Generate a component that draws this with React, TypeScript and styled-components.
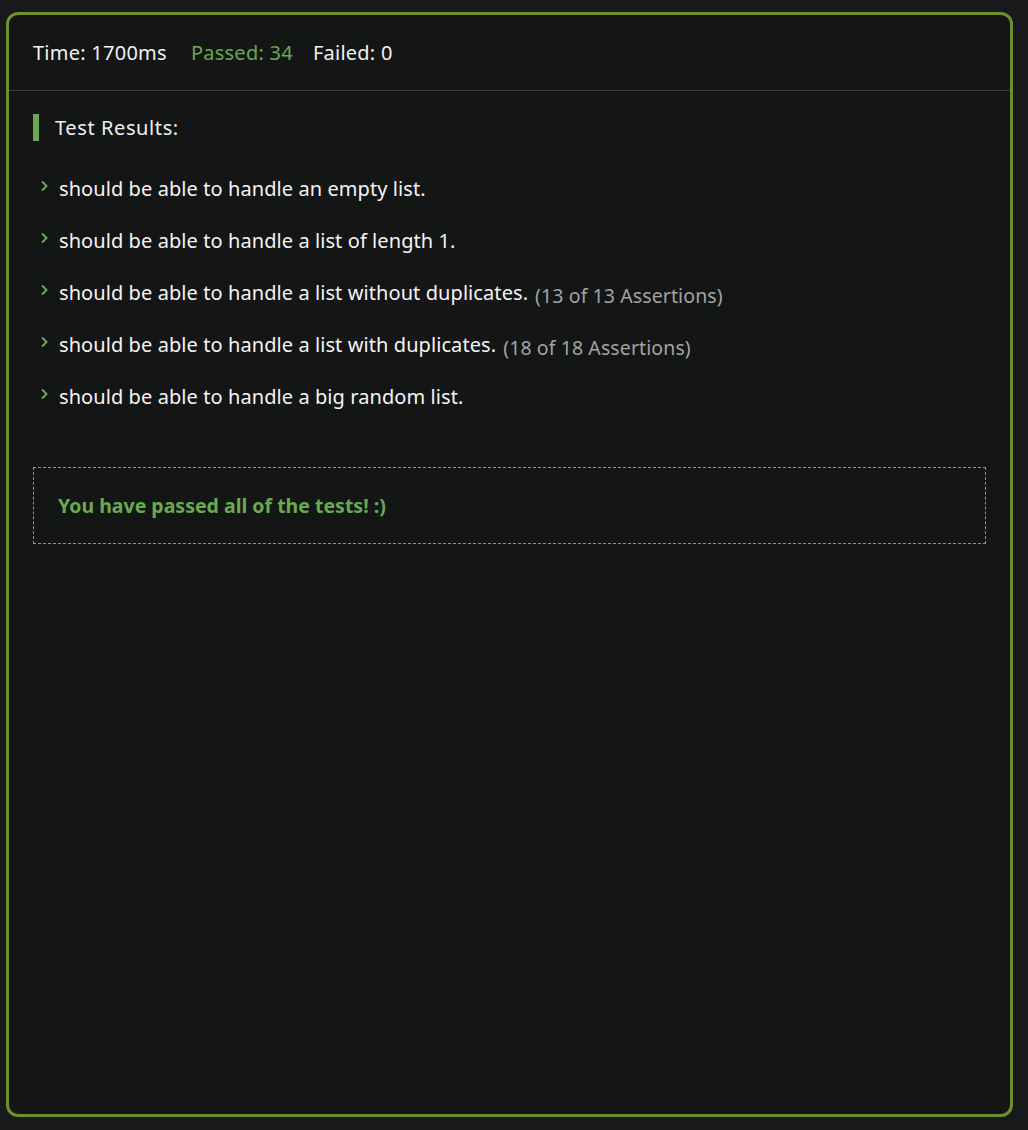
import React from "react";
import styled, { createGlobalStyle } from "styled-components";

const Global = createGlobalStyle`
  html, body {
    margin: 0;
    padding: 0;
    background: #18191b;
  }
  body {
    font-family: "Noto Sans", "Open Sans", sans-serif;
    color: #f0f0f0;
  }
`;

const Page = styled.div`
  padding: 12px 15px 13px 6px;
  height: 1130px;
  box-sizing: border-box;
  display: flex;
`;

const Panel = styled.div`
  flex: 1;
  border: 3px solid #6f8f2e;
  border-radius: 12px;
  background: #141515;
  display: flex;
  flex-direction: column;
`;

const Header = styled.div`
  height: 76px;
  border-bottom: 1px solid #3b3c3c;
  display: flex;
  align-items: center;
  padding: 0 24px;
  gap: 24px;
  font-size: 20px;
  letter-spacing: 0.25px;
  box-sizing: border-box;
`;

const Stat = styled.span<{ $color?: string }>`
  color: ${(p) => p.$color || "#f2f2f2"};
  margin-right: ${(p) => (p.$color ? "-4px" : "0")};
`;

const Body = styled.div`
  padding: 23px 24px 0 24px;
  display: flex;
  flex-direction: column;
`;

const SectionTitle = styled.div`
  display: flex;
  align-items: center;
  gap: 16px;
  font-size: 20px;
  letter-spacing: 0.6px;
  color: #f0f0f0;
  height: 27px;
`;

const Bar = styled.div`
  width: 6px;
  height: 27px;
  background: #6aa84f;
`;

const List = styled.ul`
  list-style: none;
  margin: 30px 0 0 0;
  padding: 0;
  display: flex;
  flex-direction: column;
  gap: 18px;
`;

const Item = styled.li`
  display: flex;
  align-items: center;
  height: 34px;
  font-size: 20px;
  letter-spacing: 0.08px;
  color: #f4f4f4;
`;

const Chevron = styled.svg`
  width: 10px;
  height: 14px;
  margin: 0 10px 5px 6px;
  flex-shrink: 0;
`;

const Count = styled.span`
  color: #a3a3a3;
  font-size: 19.5px;
  letter-spacing: 0.1px;
  margin-left: 7px;
  position: relative;
  top: 3px;
`;

const Success = styled.div`
  margin-top: 54px;
  border: 1px dashed #72b052;
  height: 77px;
  box-sizing: border-box;
  display: flex;
  align-items: center;
  padding-left: 24px;
  font-size: 19.5px;
  font-weight: 700;
  color: #6aaa4e;
`;

const tests: { name: string; count?: string }[] = [
  { name: "should be able to handle an empty list." },
  { name: "should be able to handle a list of length 1." },
  { name: "should be able to handle a list without duplicates.", count: "(13 of 13 Assertions)" },
  { name: "should be able to handle a list with duplicates.", count: "(18 of 18 Assertions)" },
  { name: "should be able to handle a big random list." },
];

export default function App() {
  return (
    <>
      <Global />
      <Page>
        <Panel>
          <Header>
            <Stat>Time: 1700ms</Stat>
            <Stat $color="#6aa84f">Passed: 34</Stat>
            <Stat>Failed: 0</Stat>
          </Header>
          <Body>
            <SectionTitle>
              <Bar />
              Test Results:
            </SectionTitle>
            <List>
              {tests.map((t) => (
                <Item key={t.name}>
                  <Chevron viewBox="0 0 10 14">
                    <path d="M3 2.5 L7.5 7 L3 11.5" fill="none" stroke="#6aa84f" strokeWidth="2" />
                  </Chevron>
                  {t.name}
                  {t.count && <Count>{t.count}</Count>}
                </Item>
              ))}
            </List>
            <Success>You have passed all of the tests! :)</Success>
          </Body>
        </Panel>
      </Page>
    </>
  );
}
